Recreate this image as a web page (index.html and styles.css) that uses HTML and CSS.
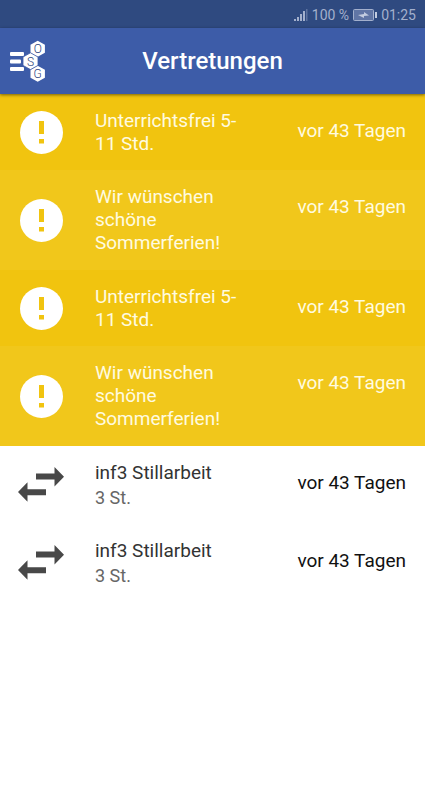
FILE: index.html
```
<!DOCTYPE html>
<html lang="de">
<head>
<meta charset="utf-8">
<meta name="viewport" content="width=device-width, initial-scale=1">
<title>Vertretungen</title>
<link rel="stylesheet" href="styles.css">
</head>
<body>
<svg class="sprite" aria-hidden="true">
  <symbol id="alert" viewBox="0 0 43 43">
    <circle cx="21.5" cy="21.5" r="21.5" fill="#fff"/>
    <path fill="#f1c40f" d="M19 10h5v13h-5zM19 28h5v4.500h-5z"/>
  </symbol>
  <symbol id="swap" viewBox="0 0 46 36">
    <path fill="#484848" d="M18 6.500h18.500V0L46 9.700l-9.500 9.700v-6.900H18zM28 22.200H9.500v-6.900L0 25l9.500 9.700v-6.500H28z"/>
  </symbol>
</svg>
<div class="status">
  <svg class="signal" viewBox="0 0 14 12" aria-hidden="true"><path d="M0 10h2v2H0zM3 8h2v4H3zM6 5h2v7H6zM9 2h2v10H9z"/><path opacity=".4" d="M12 0h1.500v12H12z"/></svg>
  <span>100 %</span>
  <svg class="battery" viewBox="0 0 24 12" aria-hidden="true"><rect x=".5" y=".5" width="20" height="11" rx="1" fill="#6075a5" stroke="#a3b0cd"/><path d="M22 3h2v6h-2zM5 6l6-1V3l5 3.500-5 .5v2z"/></svg>
  <span>01:25</span>
</div>
<header class="bar">
  <svg class="logo" viewBox="0 0 36 42" role="img" aria-label="OSG">
    <g fill="#fff">
      <rect y="12" width="14" height="4" rx="1"/><rect y="19.500" width="11" height="4" rx="1"/><rect y="27" width="14" height="4" rx="1"/>
      <path d="M27.700 .8l7.200 4v8l-7.200 4-7.200-4v-8zM27.700 25.800l7.200 4v8l-7.200 4-7.200-4v-8z"/>
      <path d="M20.500 12.800l7.500 4.200v8.400l-7.500 4.200-7.500-4.200V17z" stroke="#3d5ca8" stroke-width=".8"/>
    </g>
    <g class="logo-text"><text x="27.700" y="13">O</text><text x="20.500" y="25.500">S</text><text x="27.700" y="38">G</text></g>
  </svg>
  <h1>Vertretungen</h1>
</header>
<main>
  <article class="row notice">
    <svg class="alert" aria-hidden="true"><use href="#alert"/></svg>
    <div class="text"><p>Unterrichtsfrei 5-11 Std.</p></div><time>vor 43 Tagen</time>
  </article>
  <article class="row notice light">
    <svg class="alert" aria-hidden="true"><use href="#alert"/></svg>
    <div class="text"><p>Wir wünschen schöne Sommerferien!</p></div><time>vor 43 Tagen</time>
  </article>
  <article class="row notice">
    <svg class="alert" aria-hidden="true"><use href="#alert"/></svg>
    <div class="text"><p>Unterrichtsfrei 5-11 Std.</p></div><time>vor 43 Tagen</time>
  </article>
  <article class="row notice light">
    <svg class="alert" aria-hidden="true"><use href="#alert"/></svg>
    <div class="text"><p>Wir wünschen schöne Sommerferien!</p></div><time>vor 43 Tagen</time>
  </article>
  <article class="row lesson">
    <svg class="swap" aria-hidden="true"><use href="#swap"/></svg>
    <div class="text"><p>inf3 Stillarbeit</p><p class="sub">3 St.</p></div><time>vor 43 Tagen</time>
  </article>
  <article class="row lesson">
    <svg class="swap" aria-hidden="true"><use href="#swap"/></svg>
    <div class="text"><p>inf3 Stillarbeit</p><p class="sub">3 St.</p></div><time>vor 43 Tagen</time>
  </article>
</main>
</body>
</html>
```
FILE: styles.css
```
* { box-sizing: border-box; }
body { margin: 0; background: #fff; font-family: Roboto, sans-serif; }
h1, p { margin: 0; }
.sprite { position: absolute; width: 0; height: 0; }
.status {
  display: flex;
  align-items: center;
  justify-content: flex-end;
  gap: 4px;
  height: 28px;
  padding: 2px 9px 0;
  background: #2f4a80;
  color: #a3b0cd;
  font-size: 14px;
}
.signal { width: 14px; height: 12px; fill: #a3b0cd; }
.battery { width: 24px; height: 12px; fill: #c3cce0; }
.bar {
  position: relative;
  display: grid;
  grid-template-columns: 36px 1fr 36px;
  align-items: center;
  height: 66px;
  padding: 0 10px;
  background: #3d5ca8;
  color: #fff;
  box-shadow: 0 1px 3px rgba(0, 0, 0, 0.5);
}
.logo { width: 36px; height: 42px; }
.logo-text { font: 300 12px Roboto, sans-serif; fill: #2f4580; text-anchor: middle; }
h1 { font-size: 24px; font-weight: 500; text-align: center; }
.row {
  display: grid;
  grid-template-columns: 46px minmax(0, 150px) 1fr;
  column-gap: 31px;
  padding: 15px 19px 15px 18px;
  font-size: 19px;
  line-height: 23px;
}
.notice { background: #f1c40f; color: #fffbe0; min-height: 76px; }
.light { background: #f1c71b; min-height: 100px; }
.lesson { min-height: 78px; color: #333; }
.row svg { align-self: center; justify-self: center; }
.alert { width: 43px; height: 43px; }
.swap { width: 46px; height: 36px; }
.sub { margin-top: 2px; font-size: 18px; color: #666; }
time { padding-top: 10px; text-align: right; white-space: nowrap; }
.lesson time { color: #111; }
```
